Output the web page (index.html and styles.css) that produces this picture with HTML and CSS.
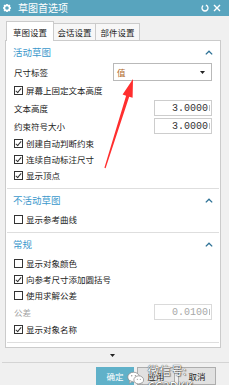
FILE: index.html
```html
<!DOCTYPE html>
<html lang="zh-CN">
<head>
<meta charset="utf-8">
<title>草图首选项</title>
<link rel="stylesheet" href="styles.css">
</head>
<body>
<div class="titlebar">
  <svg class="gear" width="8" height="8" viewBox="0 0 8 8"><circle cx="4" cy="4" r="2.6" fill="none" stroke="#fff" stroke-width="1.6"/><g stroke="#fff" stroke-width="1.6"><line x1="4" y1="0" x2="4" y2="1.6"/><line x1="4" y1="6.4" x2="4" y2="8"/><line x1="0" y1="4" x2="1.6" y2="4"/><line x1="6.4" y1="4" x2="8" y2="4"/><line x1="1.1" y1="1.1" x2="2.1" y2="2.1"/><line x1="5.9" y1="5.9" x2="6.9" y2="6.9"/><line x1="1.1" y1="6.9" x2="2.1" y2="5.9"/><line x1="5.9" y1="2.1" x2="6.9" y2="1.1"/></g></svg>
  <span class="title">草图首选项</span>
  <span class="actions">
    <svg width="8" height="8" viewBox="0 0 8 8"><path d="M5.8 1.6 A3 3 0 1 1 2.2 1.6" fill="none" stroke="#fff" stroke-width="1.3"/><path d="M5 0.3 L6.6 1.8 L4.7 2.6 Z" fill="#fff"/></svg>
    <svg width="8" height="8" viewBox="0 0 8 8"><path d="M1 1 L7 7 M7 1 L1 7" stroke="#fff" stroke-width="1.4"/></svg>
  </span>
</div>

<div class="tabs">
  <div class="tab active">草图设置</div>
  <div class="tab t2">会话设置</div>
  <div class="tab t3">部件设置</div>
</div>

<div class="panel">
  <div class="section">
    <div class="sec-head"><span>活动草图</span><svg class="caret" width="8" height="5" viewBox="0 0 8 5"><path d="M0.8 4.4 L4 1.2 L7.2 4.4" fill="none" stroke="#2e7296" stroke-width="1.3"/></svg></div>
    <div class="row">
      <span>尺寸标签</span>
      <div class="select"><span class="sel-val">值</span><svg width="5" height="3" viewBox="0 0 5 3"><path d="M0 0 L5 0 L2.5 3 Z" fill="#222"/></svg></div>
    </div>
    <div class="row cb tall"><span class="box checked"></span><span>屏幕上固定文本高度</span></div>
    <div class="row"><span>文本高度</span><div class="num">3.0000<i class="bar"></i></div></div>
    <div class="row"><span>约束符号大小</span><div class="num">3.0000<i class="bar"></i></div></div>
    <div class="row cb"><span class="box checked"></span><span>创建自动判断约束</span></div>
    <div class="row cb"><span class="box checked"></span><span>连续自动标注尺寸</span></div>
    <div class="row cb"><span class="box checked"></span><span>显示顶点</span></div>
  </div>

  <div class="section">
    <div class="sec-head"><span>不活动草图</span><svg class="caret" width="8" height="5" viewBox="0 0 8 5"><path d="M0.8 4.4 L4 1.2 L7.2 4.4" fill="none" stroke="#2e7296" stroke-width="1.3"/></svg></div>
    <div class="row cb"><span class="box"></span><span>显示参考曲线</span></div>
  </div>

  <div class="section">
    <div class="sec-head"><span>常规</span><svg class="caret" width="8" height="5" viewBox="0 0 8 5"><path d="M0.8 4.4 L4 1.2 L7.2 4.4" fill="none" stroke="#2e7296" stroke-width="1.3"/></svg></div>
    <div class="row cb"><span class="box"></span><span>显示对象颜色</span></div>
    <div class="row cb"><span class="box checked"></span><span>向参考尺寸添加圆括号</span></div>
    <div class="row cb"><span class="box"></span><span>使用求解公差</span></div>
    <div class="row disabled"><span>公差</span><div class="num">0.0100<i class="bar"></i></div></div>
    <div class="row cb"><span class="box checked"></span><span>显示对象名称</span></div>
  </div>
</div>

<div class="more"><svg width="5" height="3" viewBox="0 0 5 3"><path d="M0 0 L5 0 L2.5 3 Z" fill="#222"/></svg></div>
<div class="divider"></div>
<div class="buttons">
  <div class="btn primary">确定</div>
  <div class="btn">应用</div>
  <div class="btn">取消</div>
</div>

<div class="watermark">
  <svg width="19" height="15" viewBox="0 0 19 15"><ellipse cx="7" cy="6" rx="6.2" ry="5.2" fill="#fff" stroke="#888" stroke-width="0.8"/><path d="M3 10 L2.4 13 L5.6 10.6 Z" fill="#fff" stroke="#888" stroke-width="0.6"/><ellipse cx="12.5" cy="9" rx="5.2" ry="4.3" fill="#fff" stroke="#888" stroke-width="0.8"/><path d="M15.5 12.3 L16.6 14.6 L13.6 13 Z" fill="#fff" stroke="#888" stroke-width="0.6"/><circle cx="5" cy="4.6" r="0.8" fill="#999"/><circle cx="9" cy="4.6" r="0.8" fill="#999"/><circle cx="11" cy="8.4" r="0.6" fill="#999"/><circle cx="14.2" cy="8.4" r="0.6" fill="#999"/></svg>
  <span class="wm-text">微信号: CG3DKK</span>
</div>

<svg class="arrow" width="229" height="385" viewBox="0 0 229 385"><polygon points="133,79 132.6,97.8 129.2,96.8 105.6,168.2 104.4,167.8 126.1,95.8 122.6,94.6" fill="#ff2e2e"/></svg>
</body>
</html>
```

FILE: styles.css
```css
* { box-sizing: border-box; }
html, body { margin: 0; padding: 0; }
body {
  width: 229px;
  height: 385px;
  overflow: hidden;
  position: relative;
  background: #f0f0f0;
  font-family: "Noto Sans CJK SC", "Noto Sans", sans-serif;
  font-size: 8.5px;
  color: #222;
}

.titlebar {
  height: 16px;
  background: #58a4be;
  display: flex;
  align-items: center;
  padding: 0 8px 0 3px;
  color: #fff;
}
.gear { margin-right: 7px; }
.title { font-size: 10px; line-height: 16px; }
.actions { margin-left: auto; display: flex; gap: 4px; align-items: center; }

.tabs {
  display: flex;
  align-items: flex-end;
  height: 19px;
  margin-top: 5px;
  padding-left: 6px;
}
.tab {
  height: 17px;
  border: 1px solid #cbcbcb;
  border-bottom: none;
  background: #f7f7f7;
  display: flex;
  align-items: center;
  justify-content: center;
  margin-left: -1px;
}
.tab.active {
  width: 48px;
  height: 20px;
  margin-left: 0;
  margin-bottom: -1px;
  background: #fff;
  position: relative;
  z-index: 1;
}
.tab.t2 { width: 43px; }
.tab.t3 { width: 45px; }

.panel {
  margin: 0 8px 0 5px;
  height: 308px;
  border: 1px solid #cbcbcb;
  background: #fff;
}

.section {
  margin: 0 1px;
  padding: 0 7px 5px 6px;
  border-bottom: 1px solid #dedede;
}
.sec-head {
  height: 22px;
  display: flex;
  align-items: center;
  justify-content: space-between;
  color: #3b98cc;
  font-size: 9.5px;
}
.caret { margin-right: -1px; }

.row {
  height: 18px;
  display: flex;
  align-items: center;
  padding-left: 1px;
}
.row.cb { height: 16px; }
.row.cb.tall { height: 18px; }
.row.disabled { color: #a3a3a3; }

.box {
  width: 9px;
  height: 9px;
  border: 1px solid #333;
  background: #fff;
  margin-right: 3px;
  position: relative;
  flex: none;
}
.box.checked::after {
  content: "";
  position: absolute;
  left: 2px;
  top: 0px;
  width: 2px;
  height: 5px;
  border-right: 1px solid #333;
  border-bottom: 1px solid #333;
  transform: rotate(40deg);
}

.select {
  margin-left: auto;
  width: 99px;
  height: 18px;
  border: 1px solid #b9b9b9;
  display: flex;
  align-items: center;
  justify-content: space-between;
  padding: 0 6px 0 3px;
  background: #fff;
}
.sel-val { color: #b06a2a; }

.num {
  margin-left: auto;
  width: 58px;
  height: 16px;
  border: 1px solid #cdcdcd;
  font-family: "Liberation Mono", monospace;
  font-size: 10px;
  color: #333;
  display: flex;
  align-items: center;
  justify-content: flex-end;
  padding-right: 1px;
}
.row.disabled .num { color: #a8a8a8; border-color: #dadada; }
.bar {
  width: 1px;
  height: 6px;
  background: #bbb;
  margin-left: 1px;
}

.more {
  height: 14px;
  display: flex;
  align-items: center;
  justify-content: center;
  padding-right: 4px;
}
.divider {
  height: 1px;
  background: #d4d4d4;
  margin-left: 2px;
}
.buttons {
  display: flex;
  gap: 3px;
  margin-top: 4px;
  padding-left: 96px;
}
.btn {
  width: 38px;
  height: 18px;
  border: 1px solid #adadad;
  background: #e1e1e1;
  display: flex;
  align-items: center;
  justify-content: center;
}
.btn.primary {
  background: #60b1c9;
  border-color: #60b1c9;
  color: #fff;
}

.watermark {
  position: absolute;
  left: 127px;
  top: 362px;
  display: flex;
  align-items: center;
  gap: 3px;
}
.wm-text {
  font-size: 11.5px;
  line-height: 16px;
  color: #fff;
  font-family: "Noto Sans CJK SC", sans-serif;
  text-shadow: 0 0 1px #444, 0 0 1px #444, 1px 1px 1px rgba(0,0,0,0.4);
  letter-spacing: 0.2px;
}

.arrow {
  position: absolute;
  left: 0;
  top: 0;
  pointer-events: none;
}
```
